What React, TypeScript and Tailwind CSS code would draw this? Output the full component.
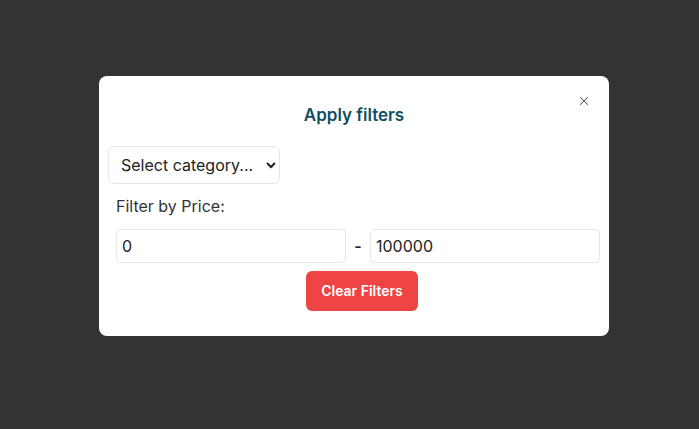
import { X } from "lucide-react"

const App = () => {
  return (
    <main className="min-h-screen w-full bg-[#333333] pt-[76px] pl-[99px] font-['Inter',sans-serif]">
      <div className="relative w-[510px] h-[260px] rounded-lg bg-white px-[9px] pt-[101px]">
        <button className="absolute right-[18px] top-[18px] text-gray-600" aria-label="close">
          <X size={14} strokeWidth={1.75} />
        </button>
        <h2 className="absolute left-0 right-0 top-[25px] text-center text-[17px] leading-7 font-semibold text-[#0f4f5f]">
          Apply filters
        </h2>
        <div className="-mt-[31px]">
          <select className="h-[38px] w-[172px] rounded-md border border-gray-200 bg-white pl-2 pr-2 text-base text-[#222]">
            <option>Select category...</option>
          </select>
        </div>
        <div className="pl-2">
          <p className="mt-[10px] text-base leading-6 text-[#333]">Filter by Price:</p>
          <div className="mt-[11px] flex items-center">
            <input
              className="h-[34px] w-[230px] shrink-0 rounded border border-gray-200 px-[5px] text-base text-[#222] outline-none"
              defaultValue="0"
            />
            <span className="w-[24px] shrink-0 text-center text-base font-semibold text-[#222]">-</span>
            <input
              className="h-[34px] w-[230px] shrink-0 rounded border border-gray-200 px-[5px] text-base text-[#222] outline-none"
              defaultValue="100000"
            />
          </div>
          <div className="mt-2 flex justify-center pl-2">
            <button className="h-10 w-[112px] rounded-md bg-[#ef4444] text-sm font-semibold text-white">
              Clear Filters
            </button>
          </div>
        </div>
      </div>
    </main>
  )
}

export default App
